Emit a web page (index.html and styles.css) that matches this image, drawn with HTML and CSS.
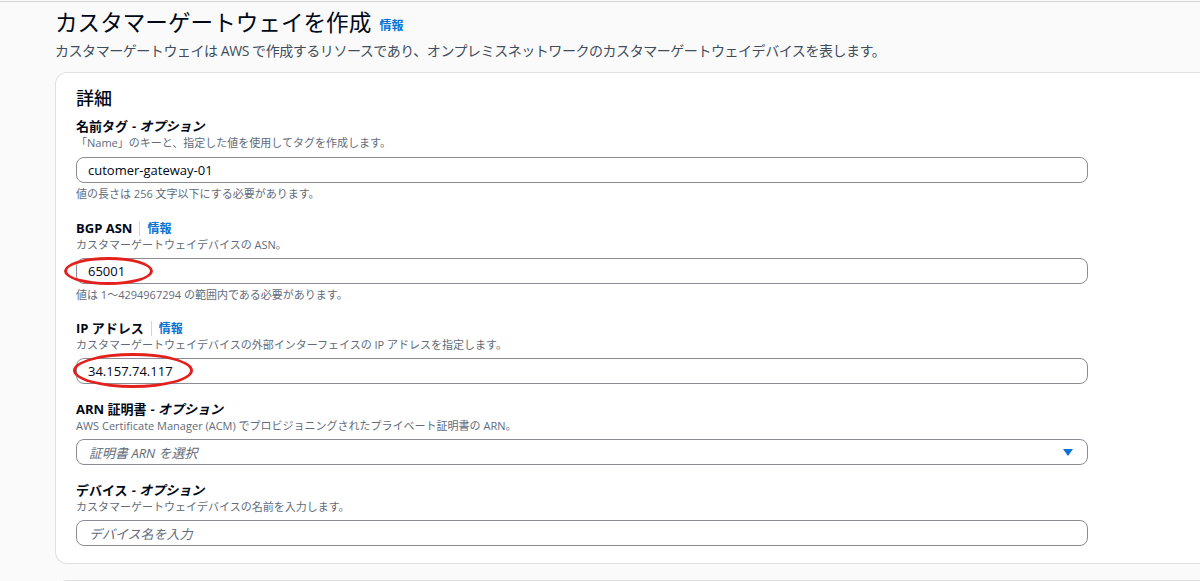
FILE: index.html
```html
<!DOCTYPE html>
<html lang="ja">
<head>
<meta charset="utf-8">
<title>カスタマーゲートウェイを作成</title>
<link rel="stylesheet" href="styles.css">
</head>
<body>
<div class="page">
  <header class="header">
    <h1 class="title">カスタマーゲートウェイを作成 <a class="info info-title" href="#">情報</a></h1>
    <p class="subtitle">カスタマーゲートウェイは AWS で作成するリソースであり、オンプレミスネットワークのカスタマーゲートウェイデバイスを表します。</p>
  </header>

  <section class="card">
    <h2 class="card-title">詳細</h2>

    <div class="field field-first">
      <div class="label">名前タグ <i>- オプション</i></div>
      <div class="desc">「Name」のキーと、指定した値を使用してタグを作成します。</div>
      <div class="input"><span class="value">cutomer-gateway-01</span></div>
      <div class="hint">値の長さは 256 文字以下にする必要があります。</div>
    </div>

    <div class="field">
      <div class="label">BGP ASN <span class="sep"></span><a class="info" href="#">情報</a></div>
      <div class="desc">カスタマーゲートウェイデバイスの ASN。</div>
      <div class="input-wrap">
        <div class="input"><span class="value">65001</span></div>
        <span class="mark mark-asn"></span>
      </div>
      <div class="hint">値は 1〜4294967294 の範囲内である必要があります。</div>
    </div>

    <div class="field">
      <div class="label">IP アドレス <span class="sep"></span><a class="info" href="#">情報</a></div>
      <div class="desc">カスタマーゲートウェイデバイスの外部インターフェイスの IP アドレスを指定します。</div>
      <div class="input-wrap">
        <div class="input"><span class="value">34.157.74.117</span></div>
        <span class="mark mark-ip"></span>
      </div>
    </div>

    <div class="field">
      <div class="label">ARN 証明書 <i>- オプション</i></div>
      <div class="desc">AWS Certificate Manager (ACM) でプロビジョニングされたプライベート証明書の ARN。</div>
      <div class="input select">
        <span class="placeholder">証明書 ARN を選択</span>
        <svg class="caret" width="10" height="7" viewBox="0 0 10 7"><path d="M0 0h10L5 7z" fill="#0972d3"/></svg>
      </div>
    </div>

    <div class="field last">
      <div class="label">デバイス <i>- オプション</i></div>
      <div class="desc">カスタマーゲートウェイデバイスの名前を入力します。</div>
      <div class="input"><span class="placeholder">デバイス名を入力</span></div>
    </div>
  </section>

  <section class="card card-next"></section>
</div>
</body>
</html>
```

FILE: styles.css
```css
html, body {
  margin: 0;
  padding: 0;
  overflow: hidden;
}
body {
  background: #fafafa;
  font-family: "Open Sans", "Noto Sans CJK JP", sans-serif;
  color: #000716;
}
.page {
  margin-top: 1px;
  border-top: 1px solid #d5d5d5;
}
.header {
  padding: 6px 0 0 55px;
  height: 64px;
  box-sizing: border-box;
}
.title {
  margin: 0;
  font-size: 22.6px;
  line-height: 28px;
  font-weight: 400;
  font-family: "Noto Sans CJK JP", sans-serif;
}
.info {
  color: #0972d3;
  text-decoration: none;
  font-size: 12px;
  font-weight: 700;
  font-family: "Noto Sans CJK JP", sans-serif;
}
.info-title {
  margin-left: 3px;
  vertical-align: 1px;
}
.subtitle {
  margin: 2px 0 0;
  font-size: 14px;
  line-height: 20px;
  color: #414d5c;
  letter-spacing: -0.45px;
}
.card {
  margin-left: 55px;
  margin-top: 6px;
  background: #fff;
  border: 1px solid #e0e0e0;
  border-right: none;
  border-radius: 12px 0 0 12px;
  padding: 12px 0 17px 20px;
}
.card-next {
  margin-top: 16px;
  height: 40px;
  padding: 0;
}
.card-title {
  margin: 0 0 8px;
  font-size: 18px;
  line-height: 24px;
  font-weight: 500;
  font-family: "Noto Sans CJK JP", sans-serif;
}
.field {
  width: 1012px;
  margin-bottom: 16px;
}
.field-first {
  margin-bottom: 17px;
}
.field-first .input {
  margin-top: 6px;
}
.field.last {
  margin-bottom: 0;
}
.label {
  font-size: 13px;
  line-height: 18px;
  font-weight: 700;
  display: flex;
  align-items: center;
}
.label i {
  margin-left: 4px;
  font-style: italic;
}
.sep {
  display: inline-block;
  width: 1px;
  height: 15px;
  background: #d1d5db;
  margin: 0 7px 0 7px;
}
.desc, .hint {
  font-size: 11px;
  line-height: 16px;
  color: #5f6b7a;
}
.hint {
  margin-top: 3px;
  margin-bottom: 5px;
}
.input-wrap {
  position: relative;
  margin-top: 5px;
}
.input-wrap .input {
  margin-top: 0;
}
.input {
  margin-top: 5px;
  height: 26px;
  box-sizing: border-box;
  border: 1px solid #8c8c94;
  border-radius: 8px;
  padding: 0 14px 0 11px;
  display: flex;
  align-items: center;
  background: #fff;
  font-size: 13px;
}
.value {
  color: #000716;
}
.placeholder {
  color: #5f6b7a;
  font-style: italic;
  padding-left: 1px;
}
.select {
  justify-content: space-between;
}
.caret {
  display: block;
}
.mark {
  position: absolute;
  border: 3px solid #e3201b;
  border-radius: 50%;
  box-sizing: border-box;
  pointer-events: none;
}
.mark-asn {
  left: -12px;
  top: -1px;
  width: 89px;
  height: 28px;
}
.mark-ip {
  left: -3px;
  top: -5px;
  width: 120px;
  height: 35px;
}
```
